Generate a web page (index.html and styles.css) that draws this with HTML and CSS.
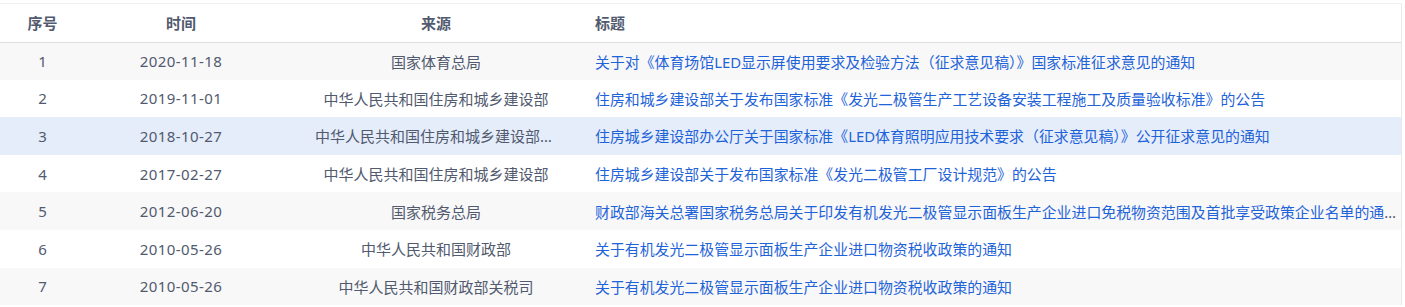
FILE: index.html
```html
<!DOCTYPE html>
<html lang="zh-CN">

<head>
	<title>标准公告列表</title>
	<meta charset="utf-8" />
	<meta name="viewport" content="width=device-width, initial-scale=1">
	<link rel="stylesheet" href="styles.css">
</head>

<body>
	<div class="wrap">
		<table class="list">
			<colgroup>
				<col class="c-no">
				<col class="c-date">
				<col class="c-src">
				<col class="c-title">
			</colgroup>
			<tr>
				<th>序号</th>
				<th>时间</th>
				<th>来源</th>
				<th class="left">标题</th>
			</tr>
			<tr class="odd">
				<td>1</td>
				<td class="date">2020-11-18</td>
				<td class="src">国家体育总局</td>
				<td class="title"><a href="#">关于对《体育场馆LED显示屏使用要求及检验方法（征求意见稿）》国家标准征求意见的通知</a></td>
			</tr>
			<tr>
				<td>2</td>
				<td class="date">2019-11-01</td>
				<td class="src">中华人民共和国住房和城乡建设部</td>
				<td class="title"><a href="#">住房和城乡建设部关于发布国家标准《发光二极管生产工艺设备安装工程施工及质量验收标准》的公告</a></td>
			</tr>
			<tr class="cur">
				<td>3</td>
				<td class="date">2018-10-27</td>
				<td class="src">中华人民共和国住房和城乡建设部办公厅</td>
				<td class="title"><a href="#">住房城乡建设部办公厅关于国家标准《LED体育照明应用技术要求（征求意见稿）》公开征求意见的通知</a></td>
			</tr>
			<tr>
				<td>4</td>
				<td class="date">2017-02-27</td>
				<td class="src">中华人民共和国住房和城乡建设部</td>
				<td class="title"><a href="#">住房城乡建设部关于发布国家标准《发光二极管工厂设计规范》的公告</a></td>
			</tr>
			<tr class="odd">
				<td>5</td>
				<td class="date">2012-06-20</td>
				<td class="src">国家税务总局</td>
				<td class="title"><a href="#">财政部海关总署国家税务总局关于印发有机发光二极管显示面板生产企业进口免税物资范围及首批享受政策企业名单的通知</a></td>
			</tr>
			<tr>
				<td>6</td>
				<td class="date">2010-05-26</td>
				<td class="src">中华人民共和国财政部</td>
				<td class="title"><a href="#">关于有机发光二极管显示面板生产企业进口物资税收政策的通知</a></td>
			</tr>
			<tr class="odd">
				<td>7</td>
				<td class="date">2010-05-26</td>
				<td class="src">中华人民共和国财政部关税司</td>
				<td class="title"><a href="#">关于有机发光二极管显示面板生产企业进口物资税收政策的通知</a></td>
			</tr>
		</table>
	</div>
</body>

</html>
```
FILE: styles.css
```css
* {
	box-sizing: border-box
}

body,
html {
	margin: 0;
	background-color: white;
	font-family: "Noto Sans", "Noto Sans CJK SC", sans-serif;
	font-size: 15px;
	color: #515a6e;
}

/* outer box, only top and right lines show */
div.wrap {
	width: 1402px;
	margin-top: 3px;
	border-top: 1px solid #f0f0f2;
	border-right: 1px solid #e8eaec;
}

table.list {
	border-collapse: collapse;
	border-spacing: 0;
	width: 100%;
	table-layout: fixed;
}

col.c-no {
	width: 85px;
}

col.c-date {
	width: 192px;
}

col.c-src {
	width: 318px;
}

th,
td {
	padding: 0;
	text-align: center;
	white-space: nowrap;
	overflow: hidden;
	text-overflow: ellipsis;
}

th {
	height: 38px;
	font-weight: 600;
	color: #515a6e;
	border-bottom: 1px solid #dcdee2;
}

td {
	height: 37.6px;
}

th.left {
	text-align: left;
}

td.date {
	letter-spacing: 0.4px;
}

td.src {
	padding: 0 38px;
}

td.title {
	text-align: left;
	font-size: 14.9px;
	padding-right: 3px;
}

tr.odd {
	background-color: #f8f8f9;
}

/* selected row */
tr.cur {
	background-color: #e5edfb;
}

a:link,
a:visited {
	color: #1f63d8;
	text-decoration: none;
}
```
